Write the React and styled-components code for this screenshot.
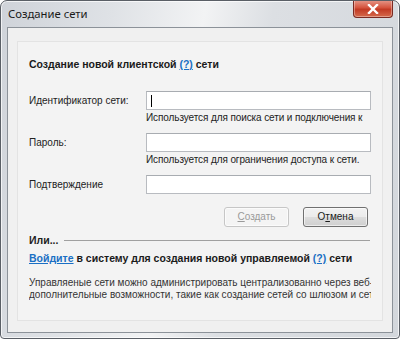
import React from 'react'
import styled, { createGlobalStyle } from 'styled-components'

const Global = createGlobalStyle`
  html, body { margin: 0; padding: 0; background: #fff; }
  * { box-sizing: border-box; }
`

function Field(props) {
  return (
    <FieldRow>
      <Label>{props.label}</Label>
      <FieldCol>
        <Input>{props.caret && <Caret />}</Input>
        {props.hint && <Hint>{props.hint}</Hint>}
      </FieldCol>
    </FieldRow>
  )
}

export default function App() {
  return (
    <>
      <Global />
      <Window>
        <TitleBar>
          <Title>Создание сети</Title>
          <Close>
            <svg width="12" height="10" viewBox="0 0 12 10">
              <path d="M2 1 L10 9 M10 1 L2 9" stroke="#fff" strokeWidth="2.4" strokeLinecap="square" />
            </svg>
          </Close>
        </TitleBar>
        <Client>
          <Panel>
            <Heading>
              Создание новой клиентской <Help>(?)</Help> сети
            </Heading>
            <Form>
              <Field label="Идентификатор сети:" caret hint="Используется для поиска сети и подключения к сети." />
              <Field label="Пароль:" hint="Используется для ограничения доступа к сети." />
              <Field label="Подтверждение" />
            </Form>
            <Buttons>
              <Button disabled><u>С</u>оздать</Button>
              <Button>О<u>т</u>мена</Button>
            </Buttons>
            <Divider>
              <span>Или...</span>
              <Line />
            </Divider>
            <Heading $second>
              <Link>Войдите</Link> в систему для создания новой управляемой <Help>(?)</Help> сети
            </Heading>
            <Para>
              Управляеные сети можно администрировать централизованно через веб-интерфейс и использовать
              <br />
              дополнительные возможности, такие как создание сетей со шлюзом и сетей с концентратором.
            </Para>
          </Panel>
        </Client>
      </Window>
    </>
  )
}

const Window = styled.div`
  width: 400px;
  height: 339px;
  border: 1px solid #5a5f66;
  border-radius: 7px 7px 4px 4px;
  background: linear-gradient(100deg, #cfd3d9 0%, #dfe2e6 25%, #f2f3f4 45%, #dcdfe3 60%, #d3d7dc 100%);
  box-shadow: inset 0 0 0 1px rgba(255,255,255,0.7);
  display: flex;
  flex-direction: column;
  font-family: "Liberation Sans", Arial, sans-serif;
  color: #1e1e1e;
  overflow: hidden;
`
const TitleBar = styled.div`
  height: 26px;
  display: flex;
  align-items: flex-start;
  justify-content: space-between;
  padding-left: 7px;
  padding-right: 6px;
`
const Title = styled.div`
  font-family: "Noto Sans", sans-serif;
  font-size: 11.3px;
  line-height: 12px;
  margin-top: 7px;
  color: #1a1a1a;
`
const Close = styled.div`
  width: 40px;
  height: 18px;
  margin-top: -1px;
  border: 1px solid #7a2a22;
  border-top: none;
  border-radius: 0 0 4px 4px;
  background: linear-gradient(#e69a8c 0%, #d5543e 45%, #c23a24 55%, #d56a4c 100%);
  box-shadow: inset 0 0 0 1px rgba(255,255,255,0.35);
  display: flex;
  align-items: center;
  justify-content: center;
`
const Client = styled.div`
  flex: 1;
  min-width: 0;
  margin: 0 6px 5px 6px;
  border: 1px solid #8c9299;
  background: #f0f0f0;
  padding: 13px 9px 11px 9px;
  display: flex;
`
const Panel = styled.div`
  flex: 1;
  min-width: 0;
  overflow: hidden;
  border: 1px solid #e3e3e3;
  background: #f3f3f3;
  padding: 15px 11px 0 11px;
  display: flex;
  flex-direction: column;
`
const Heading = styled.div`
  font-size: 10.5px;
  font-weight: 700;
  line-height: 14px;
  color: #1a1a1a;
  white-space: nowrap;
  margin-top: ${p => (p.$second ? '4px' : '0')};
`
const Help = styled.span`
  color: #1a6fc4;
  text-decoration: underline;
`
const Link = styled.span`
  color: #1a6fc4;
  text-decoration: underline;
`
const Form = styled.div`
  margin-top: 20px;
  display: flex;
  flex-direction: column;
`
const FieldRow = styled.div`
  display: grid;
  grid-template-columns: 117px 225px;
  align-items: start;
  &:not(:last-child) { height: 42px; }
`
const Label = styled.div`
  font-size: 10px;
  line-height: 14px;
  padding-top: 3px;
  color: #222;
`
const FieldCol = styled.div`
  display: flex;
  flex-direction: column;
  min-width: 0;
`
const Input = styled.div`
  height: 19px;
  width: 225px;
  background: #fff;
  border: 1px solid #b8bbc0;
  border-top-color: #a8acb1;
  position: relative;
`
const Caret = styled.div`
  position: absolute;
  left: 4px;
  top: 3px;
  width: 1px;
  height: 12px;
  background: #000;
`
const Hint = styled.div`
  font-size: 10px;
  line-height: 14px;
  height: 16px;
  margin-top: 1px;
  letter-spacing: -0.1px;
  color: #222;
  overflow: hidden;
`
const Buttons = styled.div`
  display: flex;
  justify-content: flex-end;
  gap: 14px;
  margin-top: 13px;
  padding-right: 3px;
`
const Button = styled.div`
  width: 65px;
  height: 20px;
  font-size: 10px;
  line-height: 18px;
  text-align: center;
  border-radius: 3px;
  border: 1px solid ${p => (p.disabled ? '#c6c6c6' : '#707070')};
  color: ${p => (p.disabled ? '#9a9a9a' : '#1a1a1a')};
  background: ${p => (p.disabled ? '#f4f4f4' : 'linear-gradient(#f2f2f2 0%, #ebebeb 50%, #dddddd 51%, #cfcfcf 100%)')};
  box-shadow: inset 0 0 0 1px rgba(255,255,255,0.6);
`
const Divider = styled.div`
  display: flex;
  align-items: center;
  gap: 6px;
  margin-top: 6px;
  font-size: 10.5px;
  font-weight: 700;
  line-height: 14px;
  span { flex: none; }
`
const Line = styled.div`
  flex: 1;
  height: 1px;
  background: #a0a0a0;
  margin-right: 1px;
`
const Para = styled.div`
  margin-top: 12px;
  font-size: 10px;
  line-height: 12px;
  color: #333;
  white-space: nowrap;
  overflow: hidden;
`
